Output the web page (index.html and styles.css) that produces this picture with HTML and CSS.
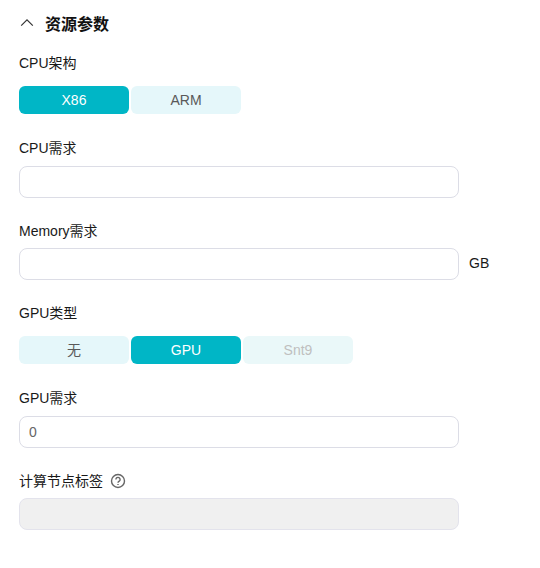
FILE: index.html
```html
<!DOCTYPE html>
<html lang="zh-CN">
<head>
<meta charset="UTF-8">
<title>资源参数</title>
<link rel="stylesheet" href="styles.css">
</head>
<body>
<main class="panel">
  <header class="heading">
    <svg class="chevron" width="14" height="10" viewBox="0 0 14 10"><path d="M1.2 7.6 7 1.8l5.8 5.8"/></svg>
    <h1>资源参数</h1>
  </header>
  <section class="field choice">
    <div class="label">CPU架构</div>
    <div class="segments">
      <button class="segment selected">X86</button>
      <button class="segment">ARM</button>
    </div>
  </section>
  <section class="field">
    <label class="label" for="cpu">CPU需求</label>
    <input class="input" id="cpu" type="text">
  </section>
  <section class="field compact">
    <label class="label" for="memory">Memory需求</label>
    <div class="row">
      <input class="input" id="memory" type="text">
      <span class="unit">GB</span>
    </div>
  </section>
  <section class="field choice">
    <div class="label">GPU类型</div>
    <div class="segments">
      <button class="segment">无</button>
      <button class="segment selected">GPU</button>
      <button class="segment" disabled>Snt9</button>
    </div>
  </section>
  <section class="field">
    <label class="label" for="gpu">GPU需求</label>
    <input class="input" id="gpu" type="text" value="0">
  </section>
  <section class="field compact">
    <label class="label" for="tags">计算节点标签
      <svg class="help" width="16" height="16" viewBox="0 0 16 16"><circle cx="8" cy="8" r="6.5"/><path d="M5.9 6.5a2.1 2.1 0 1 1 3.3 1.7C8.4 8.7 8 9 8 9.8"/><path d="M8 10.9v1.2"/></svg>
    </label>
    <input class="input" id="tags" type="text" disabled>
  </section>
</main>
</body>
</html>
```

FILE: styles.css
```css
* {
  box-sizing: border-box;
}

body {
  margin: 0;
  background: #fff;
  color: #191919;
  font: 14px/20px "Liberation Sans", "Noto Sans CJK SC", sans-serif;
}

.panel {
  padding: 12px 19px;
}

.heading {
  display: flex;
  align-items: center;
  height: 24px;
  margin-bottom: 17px;
}

.heading h1 {
  margin: 0 0 0 11px;
  padding-top: 2px;
  color: #111;
  font-size: 16px;
  line-height: 24px;
  font-weight: 700;
}

.chevron {
  margin: 0 0 2px 1px;
  fill: none;
  stroke: #333;
  stroke-width: 1.2;
}

.field {
  display: flex;
  flex-direction: column;
  align-items: flex-start;
  gap: 8px;
  margin-bottom: 23px;
}

.field.compact {
  gap: 7px;
}

.field.choice {
  gap: 13px;
  margin-bottom: 24px;
}

.label {
  display: flex;
  align-items: center;
  height: 20px;
}

.segments {
  display: flex;
  gap: 2px;
}

.segment {
  width: 110px;
  height: 28px;
  padding: 0;
  border: 0;
  border-radius: 6px;
  background: #e5f7fa;
  color: #595959;
  font: inherit;
}

.segment.selected {
  background: #00b6c6;
  color: #fff;
}

.segment:disabled {
  background: #eaf8f9;
  color: #bfbfbf;
}

.row {
  display: flex;
  align-items: center;
  gap: 10px;
}

.unit {
  padding-bottom: 2px;
}

.input {
  width: 440px;
  height: 32px;
  padding: 0 9px;
  border: 1px solid #dcdde6;
  border-radius: 8px;
  background: #fff;
  color: #666;
  font: inherit;
}

.input:disabled {
  background: #f0f0f0;
  border-color: #e3e3ec;
}

.help {
  margin-left: 7px;
  fill: none;
  stroke: #666;
  stroke-width: 1.4;
}
```
